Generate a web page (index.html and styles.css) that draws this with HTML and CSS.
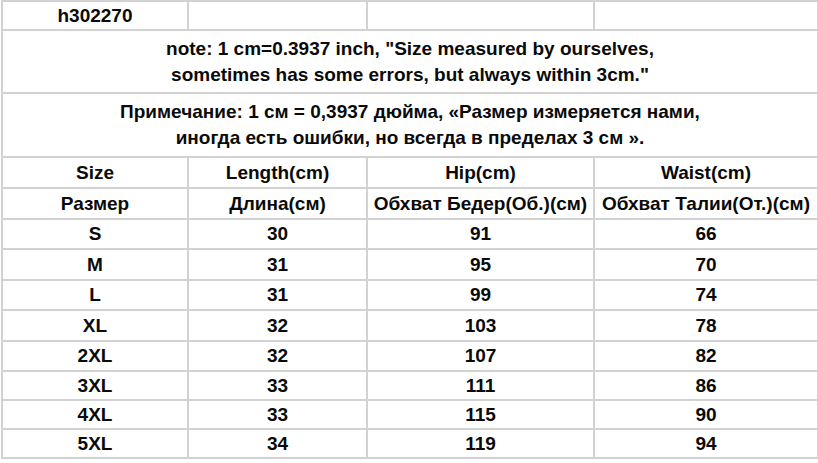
FILE: index.html
```html
<!DOCTYPE html>
<html lang="ru">
<head>
<meta charset="utf-8">
<title>Size chart h302270</title>
<link rel="stylesheet" href="styles.css">
</head>
<body>
<table class="chart">
  <colgroup>
    <col class="c1"><col class="c2"><col class="c3"><col class="c4">
  </colgroup>
  <tr class="r-top"><td>h302270</td><td></td><td></td><td></td></tr>
  <tr class="r-note"><td colspan="4">note: 1 cm=0.3937 inch, "Size measured by ourselves,<br>sometimes has some errors, but always within 3cm."</td></tr>
  <tr class="r-note r-note2"><td colspan="4">Примечание: 1 см = 0,3937 дюйма, «Размер измеряется нами,<br>иногда есть ошибки, но всегда в пределах 3 см ».</td></tr>
  <tr class="r-a"><td>Size</td><td>Length(cm)</td><td>Hip(cm)</td><td>Waist(cm)</td></tr>
  <tr class="r-a"><td>Размер</td><td>Длина(см)</td><td>Обхват Бедер(Об.)(см)</td><td>Обхват Талии(От.)(см)</td></tr>
  <tr class="r-b"><td>S</td><td>30</td><td>91</td><td>66</td></tr>
  <tr class="r-a"><td>M</td><td>31</td><td>95</td><td>70</td></tr>
  <tr class="r-b"><td>L</td><td>31</td><td>99</td><td>74</td></tr>
  <tr class="r-a"><td>XL</td><td>32</td><td>103</td><td>78</td></tr>
  <tr class="r-b"><td>2XL</td><td>32</td><td>107</td><td>82</td></tr>
  <tr class="r-c"><td>3XL</td><td>33</td><td>111</td><td>86</td></tr>
  <tr class="r-c"><td>4XL</td><td>33</td><td>115</td><td>90</td></tr>
  <tr class="r-c"><td>5XL</td><td>34</td><td>119</td><td>94</td></tr>
</table>
</body>
</html>
```

FILE: styles.css
```css
html, body {
  margin: 0;
  padding: 0;
  background: #ffffff;
}

body {
  padding: 0 0 0 1px;
  font-family: "Liberation Sans", Arial, sans-serif;
  font-weight: bold;
  font-size: 19px;
  color: #0a0a0a;
}

.chart {
  border-collapse: collapse;
  table-layout: fixed;
  width: 816px;
}

.c1 { width: 186px; }
.c2 { width: 179px; }
.c3 { width: 227px; }
.c4 { width: 224px; }

.chart td {
  border: 2px solid #d2d2d2;
  text-align: center;
  vertical-align: middle;
  padding: 0;
  white-space: nowrap;
  overflow: hidden;
  line-height: 22px;
}

.r-top td { height: 27px; }
.r-note td { height: 61px; line-height: 26px; }
.r-note2 td { height: 62px; }
.r-a td { height: 29px; }
.r-b td { height: 28px; }
.r-c td { height: 27px; }
```
